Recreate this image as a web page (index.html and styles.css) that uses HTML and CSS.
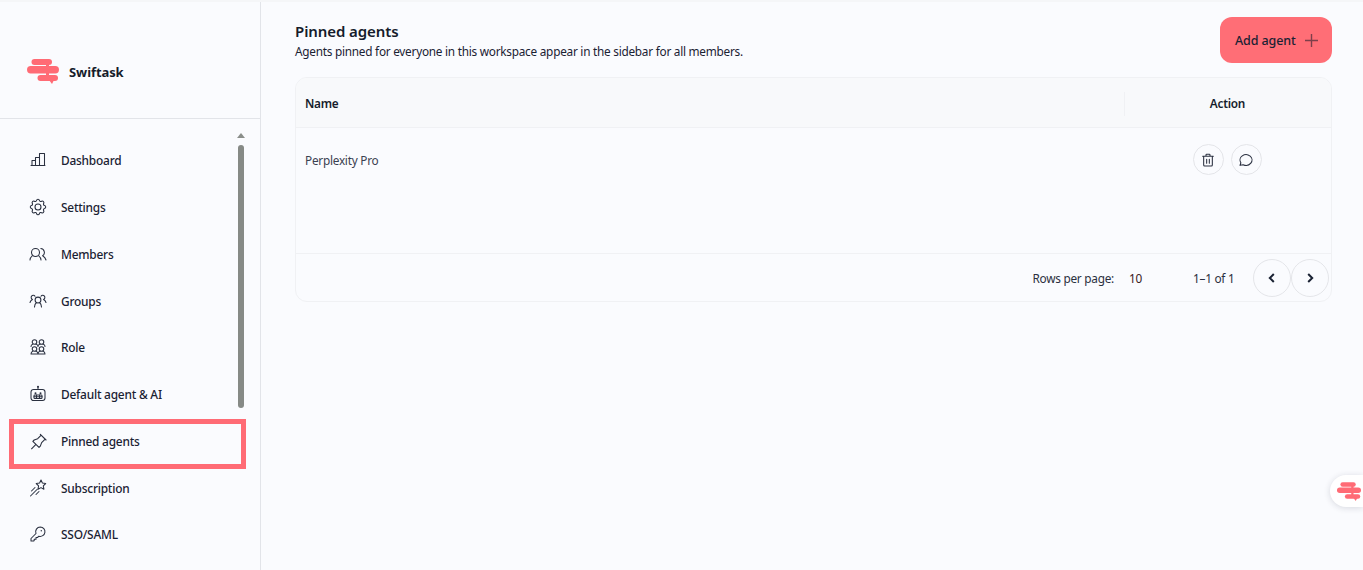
FILE: index.html
```html
<!DOCTYPE html>
<html lang="en">
<head>
<meta charset="utf-8">
<title>Pinned agents</title>
<link rel="stylesheet" href="styles.css">
</head>
<body>
<svg class="defs" width="0" height="0" aria-hidden="true">
  <symbol id="logo" viewBox="0 0 32 25">
    <rect x="19" y="4" width="3" height="14" fill="#ff6b75"/>
    <rect x="4.500" y="0" width="20.500" height="6" rx="3" fill="#ff6b75"/>
    <rect x="0" y="7" width="32" height="7.500" rx="3.700" fill="#ff6b75"/>
    <rect x="10.500" y="16" width="20.500" height="6" rx="3" fill="#ff6b75"/>
    <path d="M22 21h5l-2 4z" fill="#ff6b75"/>
  </symbol>
</svg>
<div class="app">
  <aside class="sidebar">
    <div class="brand">
      <svg class="brand-logo"><use href="#logo"/></svg>
      <span class="brand-name">Swiftask</span>
    </div>
    <nav class="nav">
      <a class="nav-item">
        <svg class="ico" viewBox="0 0 18 18"><path d="M2 14.500h14M3 14.500v-5h3.500v5M6.500 14.500v-8h4v8M10.500 14.500v-12h5v12"/></svg>
        <span>Dashboard</span>
      </a>
      <a class="nav-item">
        <svg class="ico ico-24" viewBox="1.500 1.500 21 21"><path d="M10.325 4.317c.426-1.756 2.924-1.756 3.350 0a1.724 1.724 0 0 0 2.573 1.066c1.543-.94 3.310.826 2.370 2.370a1.724 1.724 0 0 0 1.065 2.572c1.756.426 1.756 2.924 0 3.350a1.724 1.724 0 0 0-1.066 2.573c.94 1.543-.826 3.310-2.370 2.370a1.724 1.724 0 0 0-2.572 1.065c-.426 1.756-2.924 1.756-3.350 0a1.724 1.724 0 0 0-2.573-1.066c-1.543.94-3.310-.826-2.370-2.370a1.724 1.724 0 0 0-1.065-2.572c-1.756-.426-1.756-2.924 0-3.350a1.724 1.724 0 0 0 1.066-2.573c-.94-1.543.826-3.310 2.370-2.370 1 .608 2.296.07 2.572-1.065z"/><circle cx="12" cy="12" r="3.500"/></svg>
        <span>Settings</span>
      </a>
      <a class="nav-item">
        <svg class="ico" viewBox="0 0 18 18"><circle cx="6.500" cy="7.500" r="4"/><path d="M1 15c0-1.800.8-3 2.200-4.200M12 15c0-1.800-.8-3-2.200-4.200M11.800 3.500a4 4 0 0 1 1.800 7.300c1.700.9 2.900 2.200 3.400 4.200"/></svg>
        <span>Members</span>
      </a>
      <a class="nav-item">
        <svg class="ico" viewBox="0 0 18 18"><circle cx="9" cy="8" r="2.900"/><path d="M5.500 15c0-2.100.9-3.600 2-4.500M12.500 15c0-2.100-.9-3.600-2-4.500M6 4.300a2.100 2.100 0 1 0-2.500 3.100C2.200 8 1.400 9.200 1 10.500M12 4.300a2.100 2.100 0 1 1 2.500 3.100c1.300.6 2.100 1.800 2.500 3.100"/></svg>
        <span>Groups</span>
      </a>
      <a class="nav-item">
        <svg class="ico" viewBox="-1 -1 18 18"><circle cx="4.500" cy="3" r="2.300"/><circle cx="11.500" cy="3" r="2.300"/><circle cx="4.500" cy="10" r="2.300"/><circle cx="11.500" cy="10" r="2.300"/><path d="M1 7.500c0-1 1-2 1.800-2.200M8 7.500c0-1-1-2-1.800-2.200M8 7.500c0-1 1-2 1.800-2.200M15 7.500c0-1-1-2-1.800-2.200M1 15c0-1.500 1-2.500 1.800-2.800M8 15c0-1.500-1-2.500-1.800-2.800M8 15c0-1.500 1-2.500 1.800-2.800M15 15c0-1.500-1-2.500-1.800-2.800M1 15h14"/></svg>
        <span>Role</span>
      </a>
      <a class="nav-item">
        <svg class="ico" viewBox="0 0 18 18"><rect x="2" y="4.500" width="14" height="11" rx="2.500"/><path d="M9 4.500V2"/><circle class="fill" cx="9" cy="1.800" r="1"/><rect x="5" y="10" width="8" height="3.500" rx=".8"/><path d="M7.500 10v3.500M10.500 10v3.500M5 11.700h8"/><circle class="fill" cx="6.500" cy="8.300" r="1"/><circle class="fill" cx="11.500" cy="8.300" r="1"/></svg>
        <span>Default agent &amp; AI</span>
      </a>
      <a class="nav-item is-active">
        <svg class="ico ico-24" viewBox="1.100 .900 20.500 20.500"><path d="M15 4.500l-4 4-4 1.500-1.500 1.500 7 7 1.500-1.500 1.500-4 4-4M9 15l-5 5M14 3.500l6.500 6.500"/></svg>
        <span>Pinned agents</span>
      </a>
      <a class="nav-item">
        <svg class="ico" viewBox="0 1 18 18"><path d="M12 2l1.400 3 3.300.5-2.400 2.300.6 3.400-2.900-1.600-3 1.600.6-3.400L7.200 5.500 10.600 5zM6 9.500l-3.500 3.500M8 11.500l-6.500 6.500M10 13.500L7 16.500"/></svg>
        <span>Subscription</span>
      </a>
      <a class="nav-item">
        <svg class="ico" viewBox="-1 -1 18 18"><path d="M10.300 1a4.700 4.700 0 1 1-1.400 9.200l-1.400 1.300H6v1.700H4.200v1.300l-.6.5H1v-2.500L6 7.500A4.700 4.700 0 0 1 10.300 1z"/><circle class="fill" cx="11.300" cy="4.700" r=".7"/></svg>
        <span>SSO/SAML</span>
      </a>
      <div class="scroll-arrow"></div>
      <div class="scroll-thumb"></div>
    </nav>
  </aside>
  <main class="main">
    <header class="head">
      <div class="head-text">
        <h1>Pinned agents</h1>
        <p>Agents pinned for everyone in this workspace appear in the sidebar for all members.</p>
      </div>
      <button class="add-btn">Add agent
        <svg class="plus" viewBox="0 0 14 14"><path d="M7 0v14M0 7h14"/></svg>
      </button>
    </header>
    <section class="table">
      <div class="row row-head">
        <div class="cell-name">Name</div>
        <div class="cell-action"><span class="sep"></span>Action</div>
      </div>
      <div class="row row-body">
        <div class="cell-name">Perplexity Pro</div>
        <div class="cell-action">
          <button class="circle">
            <svg class="ico-sm" viewBox="0 0 24 24"><path d="M4 6.500h16M10 3.500h4a1 1 0 0 1 1 1v2H9v-2a1 1 0 0 1 1-1zM5.500 6.500v13a1.500 1.500 0 0 0 1.500 1.500h10a1.500 1.500 0 0 0 1.500-1.500v-13M10 11v6M14 11v6"/></svg>
          </button>
          <button class="circle">
            <svg class="ico-sm" viewBox="0 0 24 24"><path d="M3 20l1.300-3.900c-2.324-3.437-1.426-7.872 2.100-10.374 3.526-2.501 8.590-2.296 11.845.48 3.255 2.777 3.695 7.266 1.029 10.501-2.666 3.235-7.615 4.215-11.574 2.293L3 20"/></svg>
          </button>
        </div>
      </div>
      <footer class="pager">
        <span class="pager-label">Rows per page:</span>
        <span class="pager-size">10</span>
        <span class="pager-range">1–1 of 1</span>
        <div class="pager-btns">
          <button class="page-btn"><svg class="chev" viewBox="0 0 12 12"><path d="M7.800 2L3.800 6l4 4"/></svg></button>
          <button class="page-btn"><svg class="chev" viewBox="0 0 12 12"><path d="M4.200 2l4 4-4 4"/></svg></button>
        </div>
      </footer>
    </section>
  </main>
</div>
<div class="float-btn"><svg class="float-logo"><use href="#logo"/></svg></div>
</body>
</html>
```
FILE: styles.css
```css
* { box-sizing: border-box; }
html, body { height: 100%; }
body {
  margin: 0;
  overflow: hidden;
  background: #fafbfe;
  color: #1a2233;
  font-family: "Noto Sans", "Open Sans", sans-serif;
  font-size: 11.800px;
  letter-spacing: -.250px;
}
.defs { position: absolute; }
.app {
  display: flex;
  height: 100%;
  border-top: 2px solid #f5f6f8;
}
.sidebar {
  flex: 0 0 261px;
  border-right: 1px solid #e2e4e9;
  overflow: hidden;
}
.brand {
  display: flex;
  align-items: center;
  gap: 9px;
  height: 117px;
  padding: 24px 0 0 27px;
  border-bottom: 1px solid #e2e4e9;
}
.brand-logo { width: 32px; height: 25px; margin-top: -2px; }
.brand-name { font-size: 13px; font-weight: 700; letter-spacing: -.080px; color: #151c2b; margin-left: 1px; }
.nav {
  position: relative;
  padding: 18px 19px 0 14px;
}
.nav-item {
  position: relative;
  display: flex;
  align-items: center;
  gap: 14px;
  height: 46.750px;
  padding-left: 15px;
  font-size: 11.900px;
  font-weight: 500;
  letter-spacing: -.220px;
  color: #1a2233;
}
.nav-item span { padding-top: .2px; }
.nav-item.is-active::after {
  content: "";
  position: absolute;
  top: 1.500px;
  bottom: -4.750px;
  left: -5px;
  right: -5px;
  border: 5px solid #ff6b75;
}
.ico {
  flex: none;
  width: 18px;
  height: 18px;
  fill: none;
  stroke: #2a3040;
  stroke-width: 1.050;
  stroke-linecap: round;
  stroke-linejoin: round;
}
.ico-24 { stroke-width: 1.250; }
.ico .fill { fill: #2a3040; stroke: none; }
.scroll-arrow {
  position: absolute;
  top: 14px;
  left: 237px;
  width: 0;
  height: 0;
  border-left: 4px solid transparent;
  border-right: 4px solid transparent;
  border-bottom: 5px solid #8a8e8a;
}
.scroll-thumb {
  position: absolute;
  top: 26px;
  left: 238px;
  width: 6px;
  height: 263px;
  border-radius: 3px;
  background: #868a86;
}
.main {
  flex: 1;
  min-width: 0;
  padding: 15px 31px 0 34px;
}
.head {
  display: flex;
  align-items: flex-start;
  justify-content: space-between;
  height: 60px;
}
.head-text { padding-top: 4px; }
h1 {
  margin: 0;
  font-size: 15px;
  font-weight: 600;
  line-height: 20px;
  letter-spacing: -.090px;
  color: #151c2b;
}
.head-text p { margin: 0; padding-top: 2px; line-height: 16px; }
.add-btn {
  display: flex;
  align-items: center;
  gap: 9px;
  width: 112px;
  height: 46px;
  padding: 0 0 0 15px;
  border: 0;
  border-radius: 12px;
  background: #ff6e76;
  color: #1a2233;
  font: 500 12.500px "Noto Sans", "Open Sans", sans-serif;
  letter-spacing: -.100px;
}
.plus {
  width: 13px;
  height: 13px;
  fill: none;
  stroke: #7d3f4a;
  stroke-width: 1.500;
}
.table {
  border: 1px solid #f0f1f4;
  border-radius: 12px;
  height: 225px;
  overflow: hidden;
}
.row { display: flex; align-items: center; }
.row-head {
  height: 50px;
  background: #f8f9fb;
  border-bottom: 1px solid #f0f1f4;
  font-weight: 600;
  color: #151c2b;
}
.row-body {
  height: 126px;
  align-items: flex-start;
  border-bottom: 1px solid #f0f1f4;
  color: #3a4150;
}
.cell-name { flex: 1; padding-left: 9px; }
.row-body .cell-name { padding-top: 24px; }
.cell-action {
  position: relative;
  display: flex;
  justify-content: center;
  gap: 7px;
  width: 207px;
}
.row-body .cell-action { padding-top: 16px; padding-right: 1px; }
.sep {
  position: absolute;
  left: 0;
  top: -3px;
  height: 24px;
  border-left: 1px solid #f0f1f4;
}
.circle {
  display: flex;
  align-items: center;
  justify-content: center;
  width: 31px;
  height: 31px;
  padding: 0;
  border: 1px solid #e4e5e9;
  border-radius: 50%;
  background: transparent;
}
.ico-sm {
  width: 16px;
  height: 16px;
  fill: none;
  stroke: #2a3040;
  stroke-width: 1.600;
  stroke-linecap: round;
  stroke-linejoin: round;
}
.pager {
  display: flex;
  align-items: center;
  height: 47px;
  padding-right: 2px;
  color: #2a3040;
}
.pager span { padding-top: 1px; }
.pager-label { margin-left: auto; }
.pager-size { width: 64px; margin-left: 15px; color: #3a2020; }
.pager-range { width: 60px; }
.pager-btns { display: flex; }
.page-btn {
  display: flex;
  align-items: center;
  justify-content: center;
  width: 38px;
  height: 38px;
  padding: 0;
  border: 1px solid #e4e5e9;
  border-radius: 50%;
  background: transparent;
}
.chev {
  width: 12px;
  height: 12px;
  fill: none;
  stroke: #1a2233;
  stroke-width: 2;
}
.float-btn {
  position: absolute;
  top: 475px;
  right: 0;
  display: flex;
  align-items: center;
  width: 33px;
  height: 32px;
  padding-left: 7px;
  border-radius: 16px 0 0 16px;
  background: #fff;
  box-shadow: 0 1px 6px rgba(30, 40, 60, .16);
}
.float-logo { width: 24px; height: 19px; }
```
